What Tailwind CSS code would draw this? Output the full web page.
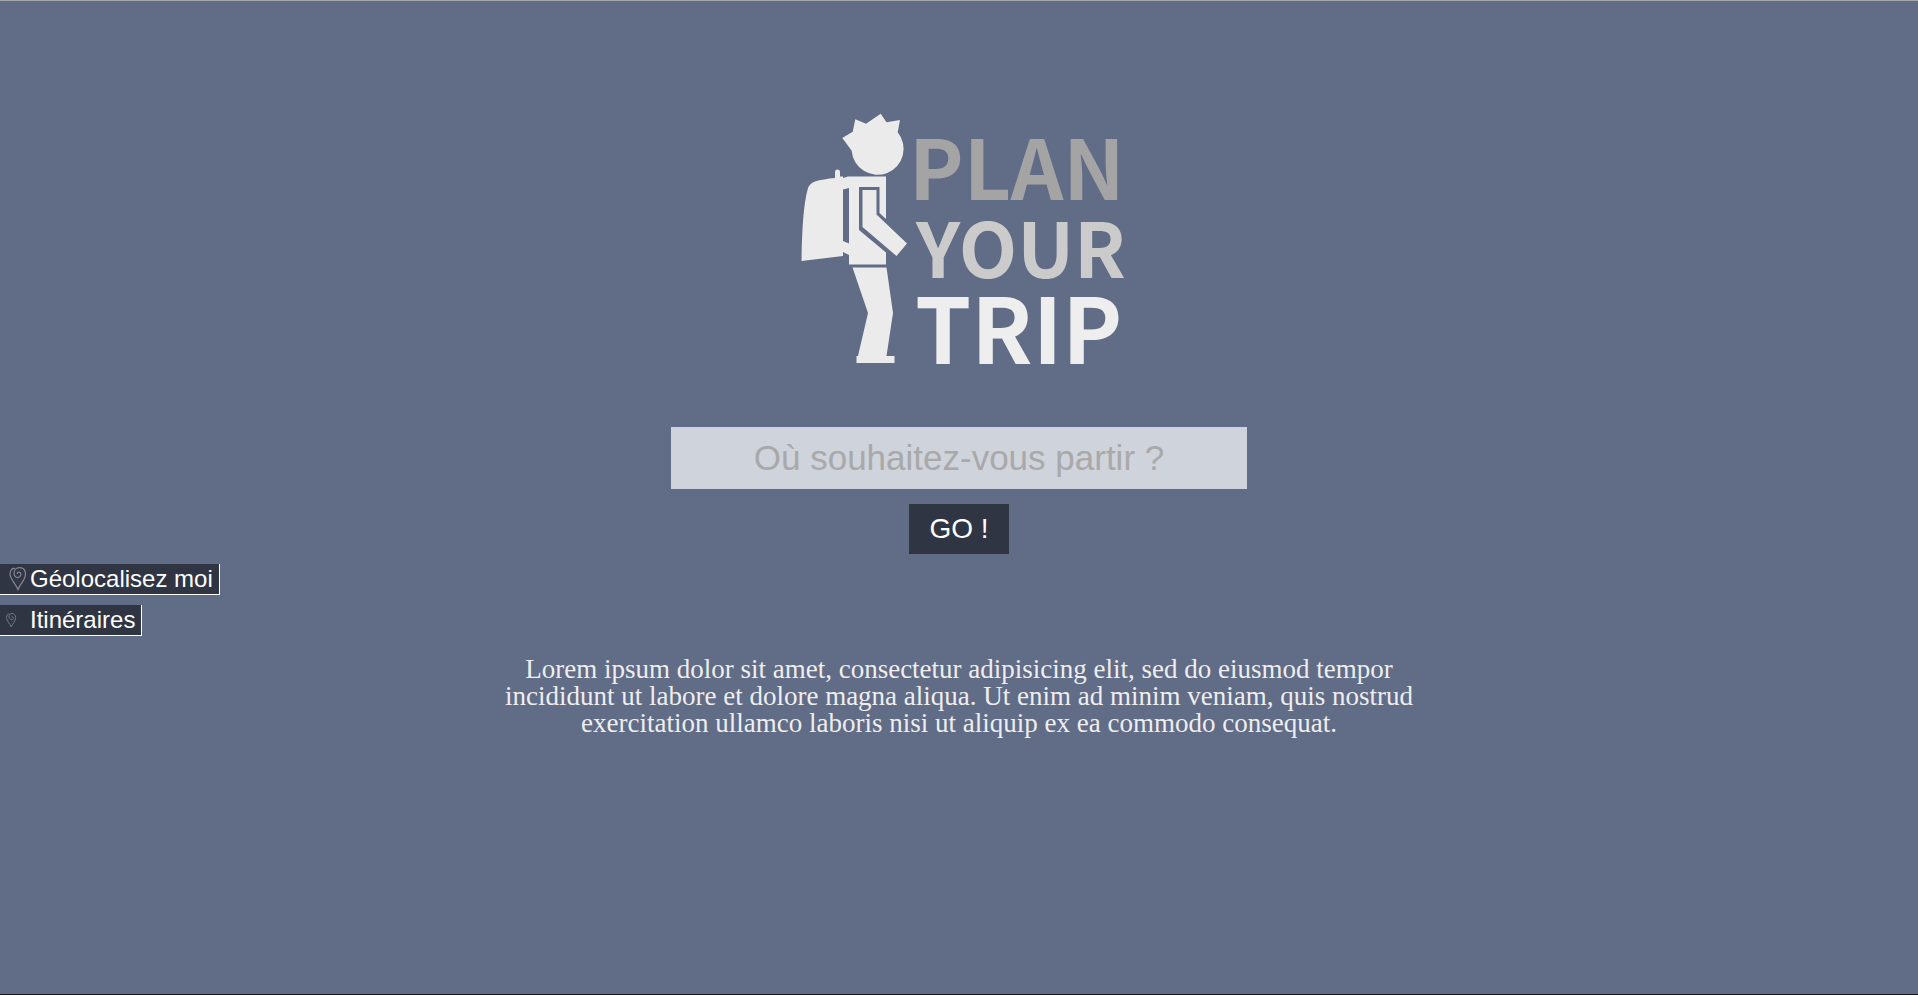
<!DOCTYPE html>
<html lang="fr">
<head>
<meta charset="utf-8">
<meta name="viewport" content="width=device-width, initial-scale=1">
<title>Plan Your Trip</title>
<script src="https://cdn.jsdelivr.net/npm/@tailwindcss/browser@4"></script>
</head>
<body class="flex min-h-screen flex-col border-t border-b border-t-[#a9a9a9] border-b-[#15151f] bg-[#616c87] font-['Liberation_Sans',Arial,sans-serif] text-white">
  <main class="flex flex-col">
    <h1 class="flex justify-center pt-28">
      <svg class="h-[254px] w-[320px] overflow-visible" viewBox="799 113 320 254" role="img" aria-label="Plan your trip">
        <g fill="#ebebeb">
          <path d="M842.300 138L852.700 131.700L855.300 119.300L866 123.700L880.700 113.700L886.500 122.300L900 120L897.700 132.300A26 26 0 1 1 851.700 150.700Z"/>
          <path d="M835 178V172a2.500 2.500 0 0 1 5 0v4.500h3v1.500L848 176.500H886V219L879.500 213V187H859V230L886 252.500V264.500H849V255L843 252V256L801.500 261C802 235 803 205 808 188Q810 183 815 181.500Q823 179 835 178ZM843 189.500V241L849 243.500V188Z" fill-rule="evenodd"/>
          <path d="M862.500 190H876.500V214.500L907 243.500L896.500 256L862.500 227Z"/>
          <path d="M852.500 267.500H886.500L893 313L886.500 356H894.500V363H856.500V356H858L868 313Z"/>
        </g>
        <g font-family="'Noto Sans CJK JP',sans-serif" font-weight="700">
          <text x="909" y="200" font-size="82" fill="#a4a4a4">PLAN</text>
          <text x="916" y="278" font-size="76" fill="#cbcbcb">YOUR</text>
          <text x="915" y="364" font-size="90" fill="#eeeeee">TRIP</text>
        </g>
      </svg>
    </h1>
    <form class="mt-[60px] flex flex-col items-center gap-[15px]">
      <input type="text" aria-label="Destination" placeholder="Où souhaitez-vous partir ?" class="h-[62px] w-[30%] bg-[#cfd3dc] text-center text-[35px] text-[#303543] outline-none placeholder:text-[#a9a9a9]">
      <button type="button" class="h-[50px] w-[100px] bg-[#303543] text-[28px] leading-8">GO !</button>
    </form>
    <div class="mt-2.5 flex flex-col items-start gap-2.5 text-2xl leading-[30px]">
      <button type="button" class="flex h-[31px] items-center border-r border-b border-white bg-[#303543] pr-[6px]">
        <svg class="ml-[8px] h-6 w-[22px]" viewBox="0 0 22 24" fill="none" stroke="#868993" stroke-width="1.200" aria-hidden="true"><path d="M7 1.500C4 .5 2 3.500 2 7C2 12 8 17 10 22.500C12 17 17.500 13 17.500 7C17.500 3 15 .7 11.500 .7C8 .7 6 3.500 6 6.500C6 9 8 11 10.500 10.500C13 10 13.500 6.500 12 5.500C10.500 4.500 9 5.500 9.500 7"/></svg>
        Géolocalisez moi
      </button>
      <button type="button" class="flex h-[31px] items-center border-r border-b border-white bg-[#303543] pr-[6px]">
        <svg class="ml-[5px] h-[15px] w-[25px]" viewBox="0 0 25 15" fill="none" stroke="#767983" aria-hidden="true"><path d="M4.500 1.200C2.500 .5 1.500 2.500 1.500 4.500C1.500 8 5 10.500 6.200 14C7.500 10.500 10.700 8 10.700 4.500C10.700 2 9 .5 7 .5C5 .5 4 2 4 4C4 6 6 7.200 7.500 6.500C8.700 5.500 8.500 3.500 6.500 3.700"/></svg>
        Itinéraires
      </button>
    </div>
    <p class="mx-auto mt-5 w-1/2 text-center font-['Liberation_Serif','Times_New_Roman',serif] text-[27px] leading-[27px] text-[#eeeeee]">Lorem ipsum dolor sit amet, consectetur adipisicing elit, sed do eiusmod tempor incididunt ut labore et dolore magna aliqua. Ut enim ad minim veniam, quis nostrud exercitation ullamco laboris nisi ut aliquip ex ea commodo consequat.</p>
  </main>
</body>
</html>
